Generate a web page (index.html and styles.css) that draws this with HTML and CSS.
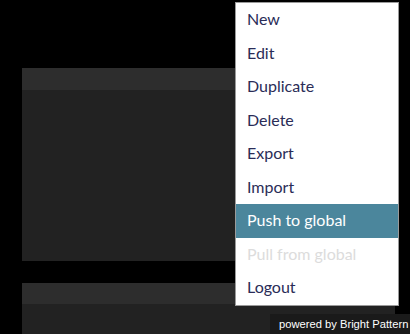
FILE: index.html
```html
<!DOCTYPE html>
<html>
<head>
    <link rel="stylesheet" href="styles.css">
</head>
<body>
    <div id="workspace">
        <div class="panel">
            <div class="panel-header"></div>
            <div class="panel-body"></div>
        </div>
        <div class="panel panel-last">
            <div class="panel-header"></div>
            <div class="panel-body"></div>
        </div>
    </div>

    <ul class="menu">
        <li class="menu-item">New</li>
        <li class="menu-item">Edit</li>
        <li class="menu-item">Duplicate</li>
        <li class="menu-item">Delete</li>
        <li class="menu-item">Export</li>
        <li class="menu-item">Import</li>
        <li class="menu-item active">Push to global</li>
        <li class="menu-item disabled">Pull from global</li>
        <li class="menu-item">Logout</li>
    </ul>

    <div class="powered">powered by Bright Pattern</div>
</body>
</html>
```

FILE: styles.css
```css
html, body {
    margin: 0;
    padding: 0;
    background-color: #000;
    height: 100%;
    overflow: hidden;
}

#workspace {
    padding-top: 68px;
    margin-left: 22px;
    width: 373px;
    display: flex;
    flex-direction: column;
    gap: 22px;
}

.panel-header {
    height: 22px;
    background-color: #2d2d2d;
}
.panel-body {
    height: 171px;
    background-color: #222;
}
.panel-last .panel-header {
    height: 21px;
}
.panel-last .panel-body {
    height: 30px;
}

.menu {
    position: absolute;
    top: 2px;
    left: 235px;
    width: 162px;
    margin: 0;
    padding: 0;
    list-style: none;
    background-color: #fff;
    border: 1px solid #9a9a9a;
}
.menu-item {
    height: 33.5px;
    line-height: 32px;
    padding-left: 11px;
    font-family: Lato, "Noto Sans", sans-serif;
    font-size: 16px;
    color: #2a2c57;
}
.menu-item.active {
    background-color: #4b869c;
    color: #fff;
}
.menu-item.disabled {
    color: #dcdcdc;
}

.powered {
    position: absolute;
    right: 0;
    bottom: 0;
    box-sizing: border-box;
    width: 140px;
    height: 20px;
    padding-left: 9px;
    background-color: #1a1a1a;
    color: #fff;
    font-family: "Liberation Sans", Arial, sans-serif;
    font-size: 11.2px;
    line-height: 21px;
    white-space: nowrap;
}
```
